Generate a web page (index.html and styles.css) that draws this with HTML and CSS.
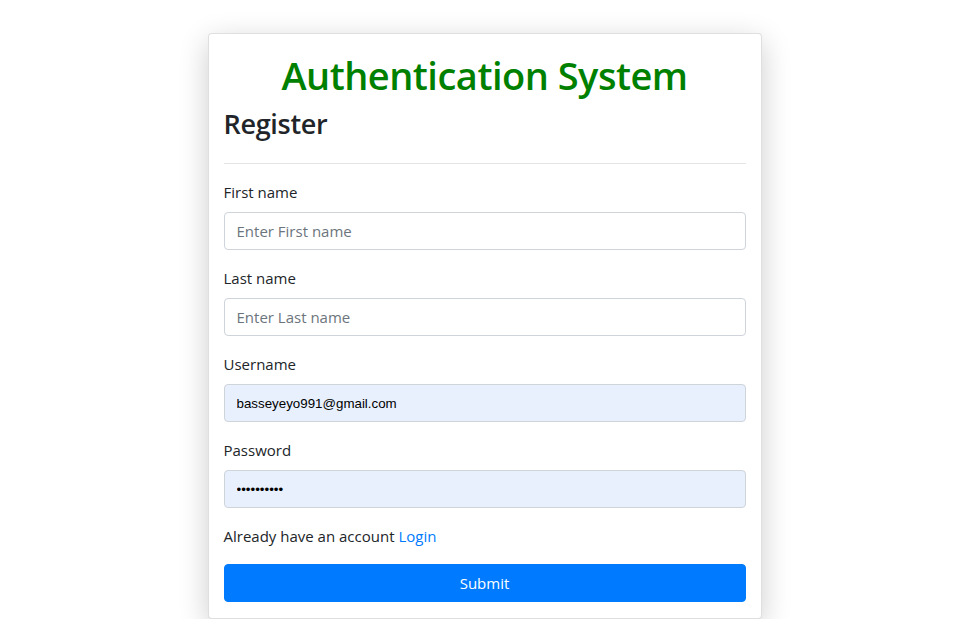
FILE: index.html
```html
<!DOCTYPE html>
<html lang="en">
<head>
<meta charset="utf-8">
<title>Authentication System</title>
<link rel="stylesheet" href="styles.css">
</head>
<body>
<div class="page">
  <div class="card">
    <h1 class="title">Authentication System</h1>
    <h3 class="subtitle">Register</h3>
    <hr class="divider">
    <form class="form">
      <div class="form-group">
        <label class="label">First name</label>
        <input class="input" type="text" placeholder="Enter First name">
      </div>
      <div class="form-group">
        <label class="label">Last name</label>
        <input class="input" type="text" placeholder="Enter Last name">
      </div>
      <div class="form-group">
        <label class="label">Username</label>
        <input class="input input-filled" type="text" value="basseyeyo991@gmail.com">
      </div>
      <div class="form-group">
        <label class="label">Password</label>
        <input class="input input-filled input-pass" type="password" value="abcdefghij">
      </div>
      <p class="form-group account">Already have an account <a class="link" href="#">Login</a></p>
      <button class="btn" type="button">Submit</button>
    </form>
  </div>
</div>
</body>
</html>
```
FILE: styles.css
```css
* { box-sizing: border-box; }
html, body { margin: 0; padding: 0; background: #fff; }
body {
  font-family: "Open Sans", "Noto Sans", sans-serif;
  color: #212529;
  font-size: 16px;
  line-height: 1.5;
}
.page {
  width: 969px;
  padding-top: 33px;
}
.card {
  width: 554px;
  margin: 0 auto;
  background: #fff;
  border: 1px solid rgba(0,0,0,0.125);
  border-radius: 4px;
  padding: 17px 15px 16px;
  box-shadow: 0 8px 30px rgba(0,0,0,0.2);
}
.title {
  margin: 0 0 8px;
  text-align: center;
  font-size: 38px;
  line-height: 48px;
  font-weight: 600;
  color: #008000;
  letter-spacing: -0.5px;
}
.subtitle {
  margin: 0;
  font-size: 27px;
  line-height: 34px;
  font-weight: 600;
  color: #212529;
  letter-spacing: -0.3px;
}
.divider {
  margin: 22px 0 16px;
  border: 0;
  border-top: 1px solid rgba(0,0,0,0.1);
}
.form { margin: 0; }
.form-group { margin: 0 0 16px; }
.label {
  display: block;
  margin-bottom: 8px;
  font-size: 15px;
  line-height: 24px;
}
.input {
  display: block;
  width: 100%;
  height: 38px;
  padding: 6px 12px;
  font-family: inherit;
  font-size: 15px;
  color: #495057;
  background: #fff;
  border: 1px solid #ced4da;
  border-radius: 4px;
  outline: none;
}
.input::placeholder { color: #6c757d; }
.input-filled {
  background: #e8f0fe;
  color: #000;
  font-family: "Liberation Sans", Arial, sans-serif;
  font-size: 13.33px;
}
.input-pass { letter-spacing: 0; }
.account {
  font-size: 15px;
  line-height: 24px;
}
.link { color: #007bff; text-decoration: none; }
.btn {
  display: block;
  width: 100%;
  height: 38px;
  padding: 6px 12px;
  font-family: inherit;
  font-size: 15px;
  color: #fff;
  background: #007bff;
  border: 1px solid #007bff;
  border-radius: 4px;
}
```
